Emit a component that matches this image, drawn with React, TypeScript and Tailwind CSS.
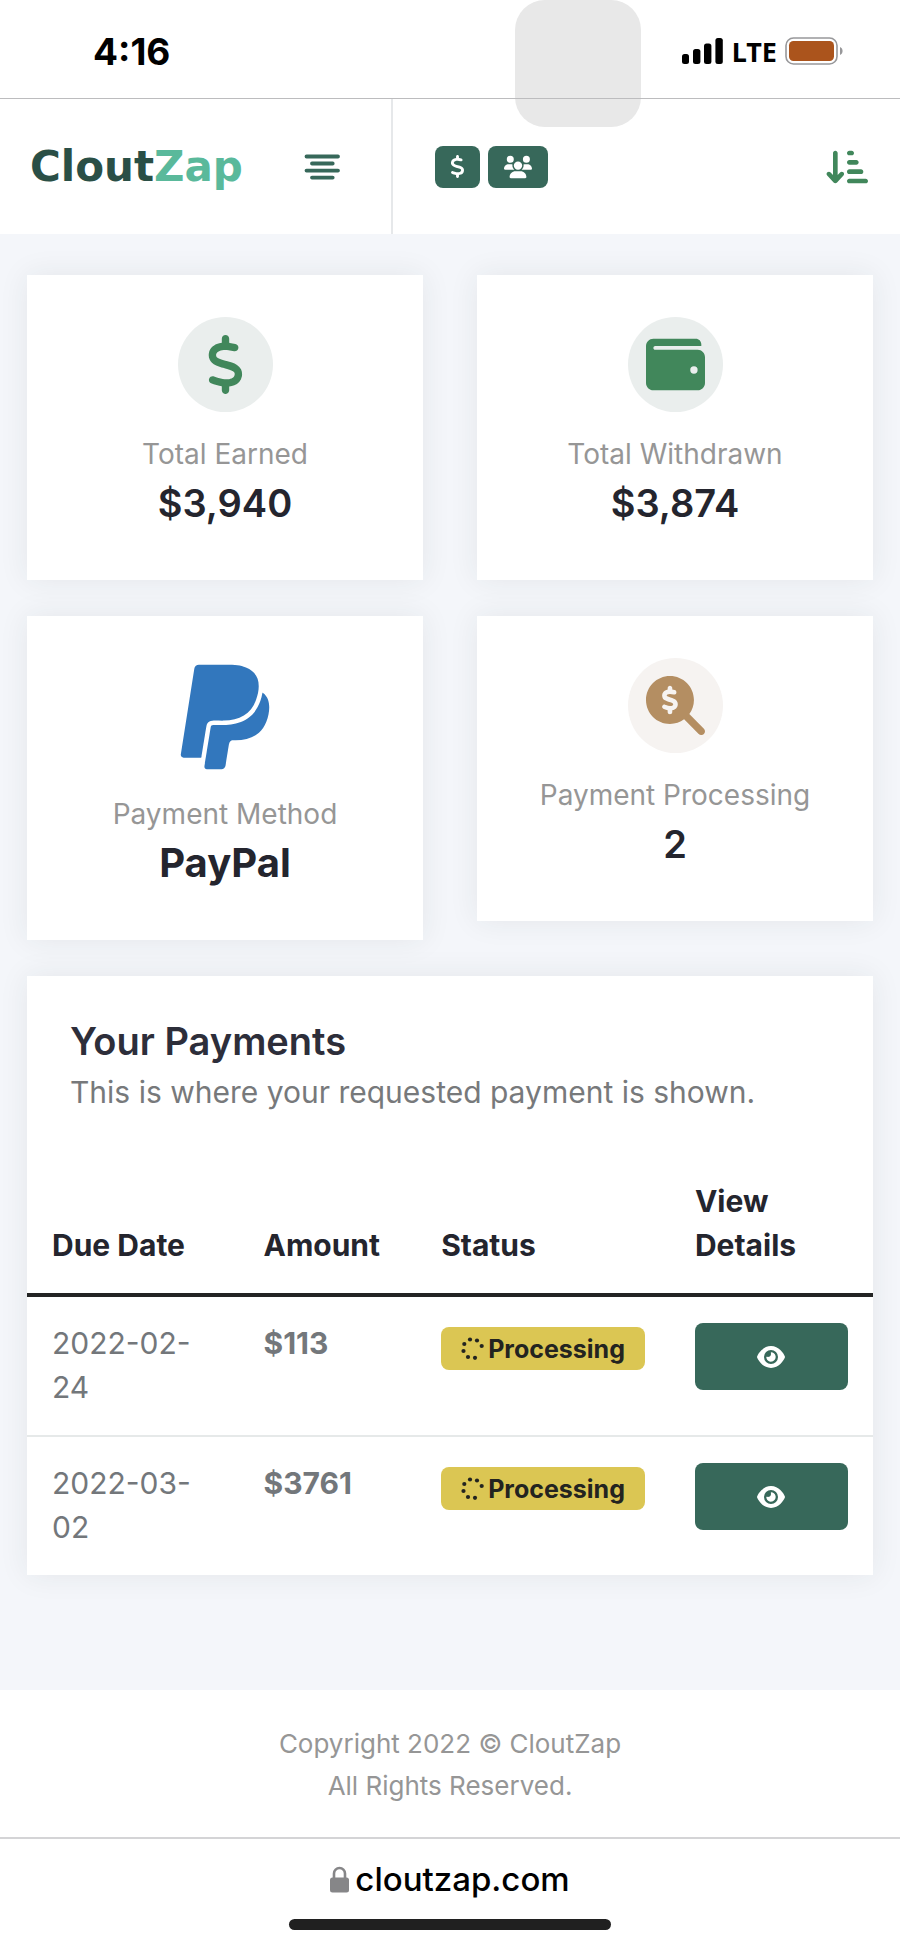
import type { ReactNode } from 'react';
import {
    FaArrowDownShortWide,
    FaDollarSign,
    FaEye,
    FaMagnifyingGlassDollar,
    FaPaypal,
    FaUsers
} from 'react-icons/fa6';

const payments = [
    { date: '2022-02-24', amount: '$113', status: 'Processing' },
    { date: '2022-03-02', amount: '$3761', status: 'Processing' }
];

function AlignIcon() {
    return (
        <svg width="36" height="26" viewBox="0 0 36 26" stroke="#37685a" strokeWidth="3.8" strokeLinecap="round">
            <path d="M2.500 2.500H34M8 9.500H28.700M2.500 16.600H34M8 23.600H28.700" />
        </svg>
    );
}

function WalletIcon() {
    return (
        <svg width="59" height="59" viewBox="0 0 512 512" fill="currentColor">
            <path
                fillRule="evenodd"
                d="M64 32H432c26.5 0 48 21.5 48 48v16H80c-8.8 0-16 7.2-16 16s7.2 16 16 16H448c35.3 0 64 28.7 64 64V416c0 35.3-28.7 64-64 64H64c-35.3 0-64-28.7-64-64V96C0 60.7 28.7 32 64 32zM416 272a32 32 0 1 0 0 64 32 32 0 1 0 0-64z"
            />
        </svg>
    );
}

function SpinnerIcon() {
    return (
        <svg width="23" height="24" viewBox="0 0 23 24" fill="currentColor">
            <circle cx="9" cy="2.5" r="2.1" />
            <circle cx="16" cy="3.5" r="2.1" />
            <circle cx="20.7" cy="9" r="2.1" />
            <circle cx="3.3" cy="7" r="2.1" />
            <circle cx="2.5" cy="14" r="2.1" />
            <circle cx="7" cy="20" r="2.1" />
            <circle cx="14" cy="20.8" r="2.1" />
        </svg>
    );
}

function SignalIcon() {
    return (
        <svg width="42" height="26" viewBox="0 0 42 26">
            <rect x="0" y="16" width="7" height="10" rx="2.5" />
            <rect x="11" y="11" width="7.4" height="15" rx="2.5" />
            <rect x="22" y="5.5" width="7.4" height="20.5" rx="2.5" />
            <rect x="33.4" y="0" width="7.4" height="26" rx="2.5" />
        </svg>
    );
}

function BatteryIcon() {
    return (
        <svg width="58" height="28" viewBox="0 0 58 28">
            <rect x="1" y="1" width="51" height="26" rx="7.5" fill="none" stroke="#98989a" strokeWidth="1.6" />
            <rect x="4" y="4" width="45" height="20" rx="4.5" fill="#ab541c" />
            <path d="M55 10c3.4 1.2 3.4 6.800 0 8z" fill="#98989a" />
        </svg>
    );
}

function LockIcon() {
    return (
        <svg width="19" height="27" viewBox="0 0 19 27">
            <path d="M4 13V7.500a5.500 5.500 0 0 1 11 0V13" fill="none" stroke="#868688" strokeWidth="2.6" />
            <rect x="0" y="11.5" width="19" height="15" rx="2.5" fill="#868688" />
        </svg>
    );
}

type StatCardProps = { label: string; value: string; valueClass?: string; children: ReactNode };

function StatCard({ label, value, valueClass = 'text-[38px] font-semibold', children }: StatCardProps) {
    return (
        <section className="flex flex-col items-center bg-white pt-[42px] pb-[54px] shadow-[0_0_28px_rgba(40,45,50,0.08)]">
            {children}
            <p className="text-[28px] leading-9 text-[#969696]">{label}</p>
            <p className={`mt-2 leading-[46px] text-[#24252e] ${valueClass}`}>{value}</p>
        </section>
    );
}

export default function App() {
    return (
        <div className="relative min-h-screen bg-white font-['Inter',sans-serif]">
            <div className="absolute top-0 left-[515px] h-[127px] w-[126px] rounded-[30px] bg-[#e8e8e8]" />

            <div className="relative flex h-[99px] items-center justify-between border-b border-[#bcbcbe] pt-1 pr-[57px] pl-[93px]">
                <time className="text-[37px] leading-none font-bold text-black">4:16</time>
                <div className="flex items-center gap-2">
                    <SignalIcon />
                    <span className="font-['Noto_Sans',sans-serif] text-[27px] leading-none font-bold text-black">LTE</span>
                    <BatteryIcon />
                </div>
            </div>

            <header className="relative flex h-[135px]">
                <div className="flex w-[393px] items-center justify-between border-r-2 border-[#e6e8ea] pr-[51px] pl-[30px]">
                    <a href="#" className="font-['DejaVu_Sans',sans-serif] text-[42px] leading-none font-bold text-[#2a4f46]">
                        Clout<span className="text-[#5ab99b]">Zap</span>
                    </a>
                    <button type="button" aria-label="Menu">
                        <AlignIcon />
                    </button>
                </div>
                <div className="flex flex-1 items-center gap-2 pr-8 pl-[42px]">
                    <button type="button" aria-label="Earnings" className="flex h-[42px] w-[45px] items-center justify-center rounded-lg bg-[#37685a] text-white">
                        <FaDollarSign size={23} />
                    </button>
                    <button type="button" aria-label="Referrals" className="flex h-[42px] w-[60px] items-center justify-center rounded-lg bg-[#37685a] text-white">
                        <FaUsers size={28} />
                    </button>
                    <button type="button" aria-label="Sort" className="ml-auto text-[#41875b]">
                        <FaArrowDownShortWide size={42} />
                    </button>
                </div>
            </header>

            <main className="relative bg-[#f4f6fa] px-[27px] pt-[41px] pb-[115px]">
                <div className="grid grid-cols-2 items-start gap-x-[54px] gap-y-9">
                    <StatCard label="Total Earned" value="$3,940">
                        <div className="mb-6 flex size-[95px] items-center justify-center rounded-full bg-[#eaeeed] text-[#41875b]">
                            <FaDollarSign size={59} />
                        </div>
                    </StatCard>
                    <StatCard label="Total Withdrawn" value="$3,874">
                        <div className="mb-6 flex size-[95px] items-center justify-center rounded-full bg-[#eaeeed] text-[#41875b]">
                            <WalletIcon />
                        </div>
                    </StatCard>
                    <StatCard label="Payment Method" value="PayPal" valueClass="text-[40px] font-bold">
                        <FaPaypal size={118} className="mb-5 text-[#3277bd]" />
                    </StatCard>
                    <StatCard label="Payment Processing" value="2">
                        <div className="mb-6 flex size-[95px] items-center justify-center rounded-full bg-[#f6f3f1] text-[#b48e62]">
                            <FaMagnifyingGlassDollar size={59} />
                        </div>
                    </StatCard>
                </div>

                <section className="mt-9 bg-white shadow-[0_0_28px_rgba(40,45,50,0.08)]">
                    <div className="px-[43px] py-[42px]">
                        <h1 className="text-[38px] leading-[46px] font-semibold text-[#2d2e3a]">Your Payments</h1>
                        <p className="mt-2 text-[30px] leading-10 text-[#77797b]">This is where your requested payment is shown.</p>
                    </div>
                    <table className="w-full table-fixed text-left text-[30px] leading-[44px]">
                        <thead className="border-b-4 border-[#232424] text-[#24252e]">
                            <tr className="align-bottom">
                                <th className="w-[25%] px-[25px] pt-[25px] pb-[26px] font-bold">Due Date</th>
                                <th className="w-[21%] px-[25px] pt-[25px] pb-[26px] font-bold">Amount</th>
                                <th className="w-[30%] px-[25px] pt-[25px] pb-[26px] font-bold">Status</th>
                                <th className="w-[24%] px-[25px] pt-[25px] pb-[26px] font-bold">View Details</th>
                            </tr>
                        </thead>
                        <tbody className="divide-y-2 divide-[#e6e9e9] text-[#73777b]">
                            {payments.map((payment) => (
                                <tr key={payment.date} className="align-top">
                                    <td className="px-[25px] pt-6 pb-[26px]">{payment.date}</td>
                                    <td className="px-[25px] pt-6 pb-[26px] font-bold">{payment.amount}</td>
                                    <td className="px-[25px] pt-[30px]">
                                        <div className="flex h-[43px] items-center justify-center gap-1 rounded-lg bg-[#dbc653] text-[25px] font-bold text-[#232420]">
                                            <SpinnerIcon />
                                            {payment.status}
                                        </div>
                                    </td>
                                    <td className="px-[25px] pt-[26px]">
                                        <button type="button" aria-label={`View payment ${payment.date}`} className="flex h-[67px] w-full items-center justify-center rounded-lg bg-[#37685a] text-white">
                                            <FaEye size={28} />
                                        </button>
                                    </td>
                                </tr>
                            ))}
                        </tbody>
                    </table>
                </section>
            </main>

            <footer className="pt-[33px] pb-[30px] text-center text-[26px] leading-[42px] text-[#969696]">
                <p>Copyright 2022 © CloutZap</p>
                <p>All Rights Reserved.</p>
            </footer>

            <div className="flex flex-col items-center border-t-2 border-[#d4d4d6] pt-5 pb-[17px]">
                <a href="#" className="flex items-center gap-1.5 text-[33px] leading-10 font-medium text-black">
                    <LockIcon />
                    cloutzap.com
                </a>
                <div className="mt-5 h-[11px] w-[322px] rounded-full bg-[#202020]" />
            </div>
        </div>
    );
}
